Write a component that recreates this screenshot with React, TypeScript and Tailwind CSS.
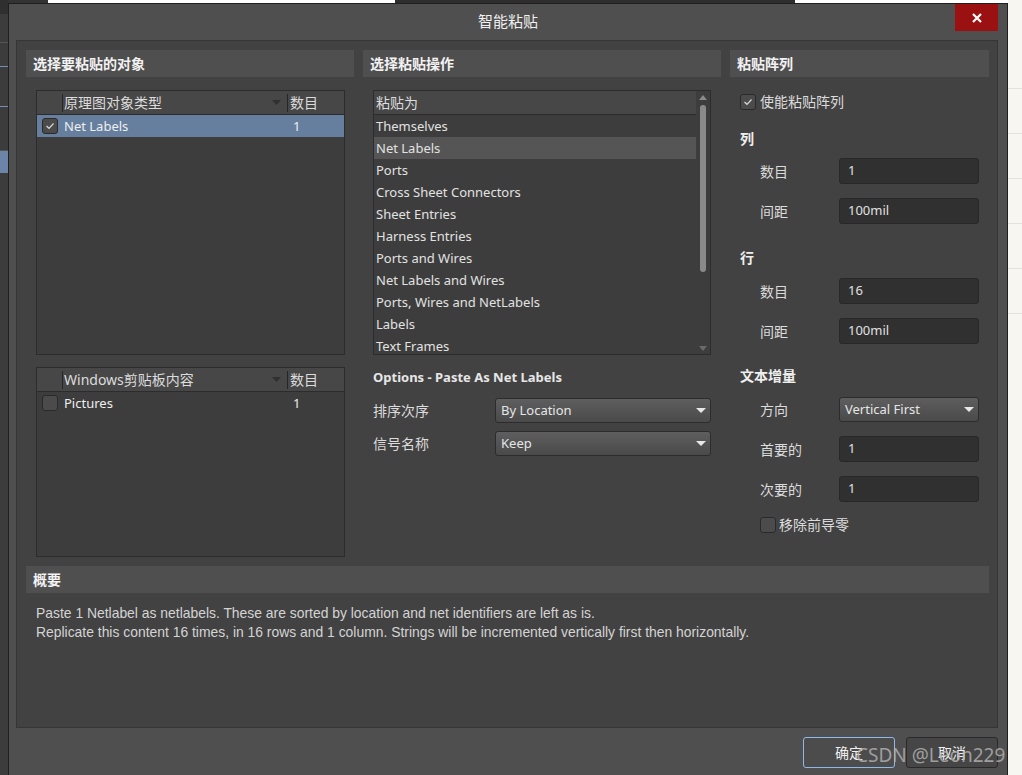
import React from 'react';

const FONT = { fontFamily: '"Noto Sans", "Noto Sans CJK SC", sans-serif' };

const listItems = [
  'Themselves',
  'Net Labels',
  'Ports',
  'Cross Sheet Connectors',
  'Sheet Entries',
  'Harness Entries',
  'Ports and Wires',
  'Net Labels and Wires',
  'Ports, Wires and NetLabels',
  'Labels',
  'Text Frames',
];

const Check: React.FC<{ checked?: boolean }> = ({ checked }) => (
  <div className="w-[16px] h-[16px] rounded-[3px] bg-[#4b4b4b] border border-[#2a2a2a] flex items-center justify-center shrink-0">
    {checked && (
      <svg width="10" height="8" viewBox="0 0 10 8">
        <path d="M1.5 4 L4 6.3 L8.5 1.5" fill="none" stroke="#d8d8d8" strokeWidth="1.2" />
      </svg>
    )}
  </div>
);

const Caret: React.FC = () => (
  <svg width="10" height="6" viewBox="0 0 10 6">
    <path d="M0 0 H10 L5 5 Z" fill="#e8e8e8" />
  </svg>
);

const Header: React.FC<{ title: string }> = ({ title }) => (
  <div className="h-[27px] shrink-0 bg-[#4f4f4f] flex items-center px-[7px] text-[14px] font-bold text-[#f2f2f2]">
    {title}
  </div>
);

const Input: React.FC<{ value: string }> = ({ value }) => (
  <div className="w-[140px] h-[26px] rounded-[3px] bg-[#303030] border border-[#282828] flex items-center px-[8px] text-[13px] text-[#e0e0e0]">
    {value}
  </div>
);

const Select: React.FC<{ value: string; w: string }> = ({ value, w }) => (
  <div className={`${w} h-[25px] rounded-[3px] border border-[#2c2c2c] bg-gradient-to-b from-[#5e5e5e] to-[#4a4a4a] flex items-center justify-between pl-[5px] pr-[4px] text-[13px] text-[#e6e6e6]`}>
    <span>{value}</span>
    <Caret />
  </div>
);

const FieldRow: React.FC<{ label: string; children: React.ReactNode; mt: string }> = ({ label, children, mt }) => (
  <div className={`flex items-center ${mt}`}>
    <span className="w-[79px] pl-[30px] box-content text-[14px] text-[#dcdcdc]">{label}</span>
    {children}
  </div>
);

const ObjTable: React.FC<{ title: string; row: string; checked?: boolean; selected?: boolean; h: string }> = ({ title, row, checked, selected, h }) => (
  <div className={`${h} border border-[#2c2c2c] bg-[#3d3d3d] flex flex-col`}>
    <div className="h-[24px] shrink-0 bg-[#474747] border-b border-[#2c2c2c] flex items-center text-[14px] text-[#dcdcdc]">
      <div className="w-[25px] h-full" />
      <div className="w-px h-[18px] bg-[#262626]" />
      <div className="flex-1 pl-[1px]">{title}</div>
      <div className="pr-[6px] flex items-center">
        <svg width="9" height="5" viewBox="0 0 9 5"><path d="M0 0 H9 L4.5 5 Z" fill="#303030" /></svg>
      </div>
      <div className="w-px h-[18px] bg-[#262626]" />
      <div className="w-[56px] pl-[2px]">数目</div>
    </div>
    <div className={`h-[22px] shrink-0 flex items-center text-[13px] text-[#eeeeee] ${selected ? 'bg-[#667f9f]' : ''}`}>
      <div className="w-[26px] flex justify-center"><Check checked={checked} /></div>
      <div className="flex-1 pl-[1px] pt-[1px]">{row}</div>
      <div className="w-[51px] pt-[1px]">1</div>
    </div>
  </div>
);

export default function App() {
  return (
    <div className="w-[1022px] h-[775px] overflow-hidden bg-[#3b3b3b] relative flex" style={FONT}>
      {/* background left strip */}
      <div className="w-[8px] shrink-0 flex flex-col bg-[#3c3c3c]">
        <div className="h-[14px] bg-[#2f2f2f]" />
        <div className="h-[29px] border-b border-[#555]" />
        <div className="h-[24px] border-b border-[#7590b5]" />
        <div className="h-[40px] border-b border-[#7590b5]" />
        <div className="h-[44px] border-b border-[#555]" />
        <div className="h-[22px] bg-[#6b84a8]" />
        <div className="flex-1" />
      </div>

      {/* dialog */}
      <div className="w-[1000px] shrink-0 flex flex-col">
        <div className="h-[3px] flex">
          <div className="w-[40px] bg-[#333]" />
          <div className="w-[347px] bg-[#ffffff]" />
          <div className="w-[400px] bg-[#2e2e2e]" />
          <div className="flex-1 bg-[#ffffff]" />
        </div>
        <div className="flex-1 bg-[#4f4f4f] border border-[#1f1f1f] border-b-0 flex flex-col">
          {/* title bar */}
          <div className="h-[36px] relative flex items-center justify-center">
            <span className="text-[15px] text-[#f0f0f0] mt-[-2px]">智能粘贴</span>
            <div className="absolute top-0 right-[9px] w-[43px] h-[27px] bg-[#9b1010] flex items-center justify-center">
              <svg width="10" height="10" viewBox="0 0 10 10">
                <path d="M1 1 L9 9 M9 1 L1 9" stroke="#ffffff" strokeWidth="2.2" />
              </svg>
            </div>
          </div>

          {/* inner panel */}
          <div className="ml-[7px] mr-[9px] h-[688px] bg-[#424242] border border-[#363636] pl-[9px] pr-[8px] pt-[9px] flex flex-col">
            <div className="flex gap-[9px]">
              {/* left column */}
              <div className="w-[328px] flex flex-col">
                <Header title="选择要粘贴的对象" />
                <div className="pl-[10px] pr-[9px] pt-[13px] flex flex-col gap-[12px]">
                  <ObjTable h="h-[265px]" title="原理图对象类型" row="Net Labels" checked selected />
                  <ObjTable h="h-[190px]" title="Windows剪贴板内容" row="Pictures" />
                </div>
              </div>

              {/* middle column */}
              <div className="w-[358px] flex flex-col">
                <Header title="选择粘贴操作" />
                <div className="pl-[10px] pr-[10px] pt-[13px]">
                  <div className="h-[265px] border border-[#2c2c2c] bg-[#3d3d3d] flex overflow-hidden">
                    <div className="flex-1 flex flex-col overflow-hidden">
                      <div className="h-[24px] shrink-0 bg-[#474747] border-b border-[#2c2c2c] flex items-center pl-[2px] text-[14px] text-[#dcdcdc]">粘贴为</div>
                      {listItems.map((it) => (
                        <div
                          key={it}
                          className={`h-[22px] shrink-0 flex items-center pl-[2px] pt-[1px] text-[13px] text-[#e2e2e2] ${it === 'Net Labels' ? 'bg-[#555555]' : ''}`}
                        >
                          {it}
                        </div>
                      ))}
                    </div>
                    <div className="w-[14px] flex flex-col items-center pt-[4px] pb-[3px]">
                      <svg width="8" height="5" viewBox="0 0 8 5"><path d="M0 5 H8 L4 0 Z" fill="#8a8a8a" /></svg>
                      <div className="w-[6px] h-[167px] mt-[5px] rounded-full bg-[#8a8a8a]" />
                      <div className="flex-1" />
                      <svg width="8" height="5" viewBox="0 0 8 5"><path d="M0 0 H8 L4 5 Z" fill="#6a6a6a" /></svg>
                    </div>
                  </div>
                  <div className="mt-[14px] h-[18px] flex items-center text-[13px] font-bold text-[#e6e6e6]">
                    Options - Paste As Net Labels
                  </div>
                  <div className="mt-[11px] flex items-center">
                    <span className="w-[122px] text-[14px] text-[#dcdcdc]">排序次序</span>
                    <Select w="w-[216px]" value="By Location" />
                  </div>
                  <div className="mt-[8px] flex items-center">
                    <span className="w-[122px] text-[14px] text-[#dcdcdc]">信号名称</span>
                    <Select w="w-[216px]" value="Keep" />
                  </div>
                </div>
              </div>

              {/* right column */}
              <div className="w-[259px] flex flex-col">
                <Header title="粘贴阵列" />
                <div className="flex flex-col">
                  <div className="mt-[14px] pl-[10px] flex items-center gap-[4px] text-[14px] text-[#dcdcdc]">
                    <Check checked />
                    <span>使能粘贴阵列</span>
                  </div>
                  <div className="mt-[17px] pl-[10px] text-[14px] font-bold text-[#efefef] h-[20px] leading-[20px]">列</div>
                  <FieldRow label="数目" mt="mt-[9px]"><Input value="1" /></FieldRow>
                  <FieldRow label="间距" mt="mt-[14px]"><Input value="100mil" /></FieldRow>
                  <div className="mt-[24px] pl-[10px] text-[14px] font-bold text-[#efefef] h-[20px] leading-[20px]">行</div>
                  <FieldRow label="数目" mt="mt-[10px]"><Input value="16" /></FieldRow>
                  <FieldRow label="间距" mt="mt-[14px]"><Input value="100mil" /></FieldRow>
                  <div className="mt-[22px] pl-[10px] text-[14px] font-bold text-[#efefef] h-[20px] leading-[20px]">文本增量</div>
                  <FieldRow label="方向" mt="mt-[11px]"><Select w="w-[140px]" value="Vertical First" /></FieldRow>
                  <FieldRow label="首要的" mt="mt-[14px]"><Input value="1" /></FieldRow>
                  <FieldRow label="次要的" mt="mt-[14px]"><Input value="1" /></FieldRow>
                  <div className="mt-[12px] pl-[30px] flex items-center gap-[3px] text-[14px] text-[#dcdcdc]">
                    <Check />
                    <span>移除前导零</span>
                  </div>
                </div>
              </div>
            </div>

            {/* summary */}
            <div className="mt-[9px]">
              <Header title="概要" />
              <div className="pt-[11px] pl-[10px] text-[13.9px] leading-[19px] text-[#d4d4d4]" style={{ fontFamily: '"Liberation Sans", sans-serif' }}>
                <div>Paste 1 Netlabel as netlabels. These are sorted by location and net identifiers are left as is.</div>
                <div>Replicate this content 16 times, in 16 rows and 1 column. Strings will be incremented vertically first then horizontally.</div>
              </div>
            </div>
          </div>

          {/* buttons */}
          <div className="mt-[9px] mr-[9px] flex justify-end gap-[11px]">
            <div className="w-[92px] h-[31px] rounded-[3px] border border-[#8fb9e8] bg-[#4c4c4c] flex items-center justify-center text-[14px] text-[#f0f0f0]">确定</div>
            <div className="w-[92px] h-[31px] rounded-[3px] border border-[#2a2a2a] bg-[#464646] flex items-center justify-center text-[14px] text-[#f0f0f0]">取消</div>
          </div>
        </div>
      </div>

      {/* background right strip */}
      <div className="flex-1 bg-[#f8f6f1] flex flex-col">
        <div className="h-[89px] border-b border-[#e6e2da]" />
        <div className="h-[45px] border-b border-[#e6e2da]" />
        <div className="h-[45px] border-b border-[#e6e2da]" />
        <div className="h-[45px] border-b border-[#e6e2da]" />
        <div className="h-[45px] border-b border-[#e6e2da]" />
        <div className="h-[45px] border-b border-[#e6e2da]" />
        <div className="flex-1" />
      </div>

      {/* watermark */}
      <div className="absolute left-[856px] top-[741px] text-[19px] text-[#b4b4b4] opacity-80 pointer-events-none">CSDN @Leon229</div>
    </div>
  );
}
